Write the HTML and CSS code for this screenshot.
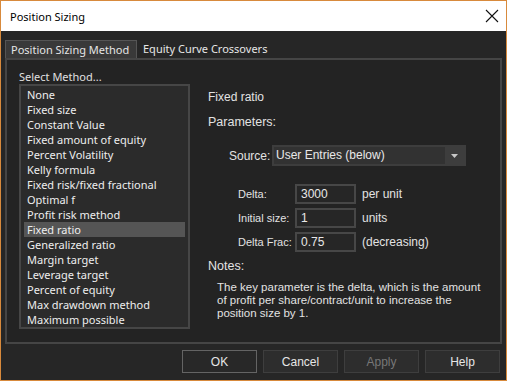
FILE: index.html
```html
<!DOCTYPE html>
<html lang="en">
<head>
    <meta charset="UTF-8">
    <title>Position Sizing</title>
    <link rel="stylesheet" href="styles.css">
</head>
<body>
    <div class="window">
        <div class="titlebar">
            <span class="title">Position Sizing</span>
            <svg class="close" width="14" height="14" viewBox="0 0 14 14">
                <path d="M1 1 L13 13 M13 1 L1 13" stroke="#111" stroke-width="1.1" fill="none"/>
            </svg>
        </div>
        <div class="content">
            <div class="tabs">
                <div class="tab active">Position Sizing Method</div>
                <div class="tab">Equity Curve Crossovers</div>
            </div>
            <div class="panel">
                <div class="left-col">
                    <div class="list-label">Select Method...</div>
                    <ul class="method-list">
                        <li>None</li>
                        <li>Fixed size</li>
                        <li>Constant Value</li>
                        <li>Fixed amount of equity</li>
                        <li>Percent Volatility</li>
                        <li>Kelly formula</li>
                        <li>Fixed risk/fixed fractional</li>
                        <li>Optimal f</li>
                        <li>Profit risk method</li>
                        <li class="selected">Fixed ratio</li>
                        <li>Generalized ratio</li>
                        <li>Margin target</li>
                        <li>Leverage target</li>
                        <li>Percent of equity</li>
                        <li>Max drawdown method</li>
                        <li>Maximum possible</li>
                    </ul>
                </div>
                <div class="right-col">
                    <div class="method-title">Fixed ratio</div>
                    <div class="section-label params">Parameters:</div>
                    <div class="source-row">
                        <span class="source-label">Source:</span>
                        <div class="combo">
                            <div class="combo-field">User Entries (below)</div>
                            <div class="combo-arrow">
                                <svg width="7" height="4" viewBox="0 0 7 4"><path d="M0 0 H7 L3.5 4 Z" fill="#c8c8c8"/></svg>
                            </div>
                        </div>
                    </div>
                    <div class="fields">
                        <div class="field-row">
                            <span class="field-label">Delta:</span>
                            <div class="field-input">3000</div>
                            <span class="field-suffix">per unit</span>
                        </div>
                        <div class="field-row">
                            <span class="field-label">Initial size:</span>
                            <div class="field-input">1</div>
                            <span class="field-suffix">units</span>
                        </div>
                        <div class="field-row">
                            <span class="field-label">Delta Frac:</span>
                            <div class="field-input">0.75</div>
                            <span class="field-suffix">(decreasing)</span>
                        </div>
                    </div>
                    <div class="section-label notes-label">Notes:</div>
                    <p class="notes">The key parameter is the delta, which is the amount<br>of profit per share/contract/unit to increase the<br>position size by 1.</p>
                </div>
            </div>
            <div class="buttons">
                <button class="btn default">OK</button>
                <button class="btn">Cancel</button>
                <button class="btn disabled">Apply</button>
                <button class="btn">Help</button>
            </div>
        </div>
    </div>
</body>
</html>
```

FILE: styles.css
```css
* {
    box-sizing: border-box;
}

body {
    margin: 0;
    background: #262626;
    font-family: "Liberation Sans", Arial, sans-serif;
}

.window {
    width: 507px;
    height: 381px;
    border: 1px solid #d88a3c; /* orange window frame */
    display: flex;
    flex-direction: column;
    background: #262626;
}

.titlebar {
    height: 30px;
    background: #fff;
    display: flex;
    align-items: center;
    justify-content: space-between;
    padding: 0 7px 0 9px;
    flex-shrink: 0;
}

.title {
    font-family: "Noto Sans", sans-serif;
    font-size: 11px;
    color: #000;
}

.content {
    flex: 1;
    padding: 9px 3px 0 4px;
    display: flex;
    flex-direction: column;
}

/* tabs */
.tabs {
    display: flex;
    height: 18px;
    font-family: "Noto Sans", sans-serif;
    font-size: 11px;
    color: #e6e6e6;
    white-space: nowrap;
}

.tab {
    padding: 0 6px;
    line-height: 17px;
}

.tab.active {
    background: #393939;
    border: 1px solid #555;
    border-bottom: none;
    padding: 0 5px;
    width: 132px;
}

.panel {
    height: 286px;
    width: 497px;
    border: 2px solid #454545;
    background: #232323;
    display: flex;
}

/* method list */
.left-col {
    margin-left: 12px;
    width: 171px;
}

.list-label {
    font-family: "Noto Sans", sans-serif;
    font-size: 11px;
    color: #e0e0e0;
    margin-top: 10px;
    line-height: 14px;
}

.method-list {
    list-style: none;
    margin: 0;
    padding: 1px 3px;
    height: 245px;
    border: 2px solid #464646;
    background: #2b2b2b;
    font-family: "Noto Sans", sans-serif;
    font-size: 11px;
    color: #eeeeee;
    white-space: nowrap;
}

.method-list li {
    height: 15px;
    line-height: 15px;
    padding-left: 3px;
}

.method-list li.selected {
    background: #555;
}

/* right side */
.right-col {
    margin-left: 18px;
    display: flex;
    flex-direction: column;
    font-size: 12px;
    color: #e2e2e2;
    white-space: nowrap;
}

.method-title {
    margin-top: 30px;
    line-height: 14px;
}

.section-label {
    line-height: 14px;
    font-size: 12.5px;
}

.params {
    margin-top: 11px;
}

.source-row {
    margin-top: 16px;
    display: flex;
    align-items: center;
    padding-left: 21px;
}

.source-label {
    width: 43px;
}

.combo {
    width: 194px;
    height: 21px;
    background: #3d3d3d;
    display: flex;
    padding: 2px;
}

.combo-field {
    flex: 1;
    background: #323232;
    line-height: 17px;
    padding-left: 2px;
    color: #e8e8e8;
}

.combo-arrow {
    width: 19px;
    display: flex;
    align-items: center;
    justify-content: center;
}

.fields {
    margin-top: 18px;
    display: flex;
    flex-direction: column;
    gap: 4px;
    padding-left: 30px;
    font-size: 11px;
}

.field-row {
    display: flex;
    align-items: center;
    height: 20px;
}

.field-label {
    width: 57px;
}

.field-input {
    width: 61px;
    height: 20px;
    border: 2px solid #474747;
    background: #262626;
    line-height: 16px;
    padding-left: 4px;
    color: #e8e8e8;
    font-size: 12px;
}

.field-suffix {
    margin-left: 6px;
    font-size: 12px;
}

.notes-label {
    margin-top: 7px;
}

.notes {
    margin: 8px 0 0;
    padding-left: 9px;
    font-size: 11.5px;
    line-height: 13px;
}

/* bottom buttons */
.buttons {
    margin-top: 6px;
    display: flex;
    justify-content: flex-end;
    gap: 6px;
    padding-right: 3px;
}

.btn {
    width: 75px;
    height: 23px;
    background: #2d2d2d;
    border: 1px solid #3e3e3e;
    color: #e6e6e6;
    font-family: "Liberation Sans", Arial, sans-serif;
    font-size: 12px;
    padding: 0;
}

.btn.default {
    background: #282828;
    border-color: #646464;
}

.btn.disabled {
    color: #777;
}
```
